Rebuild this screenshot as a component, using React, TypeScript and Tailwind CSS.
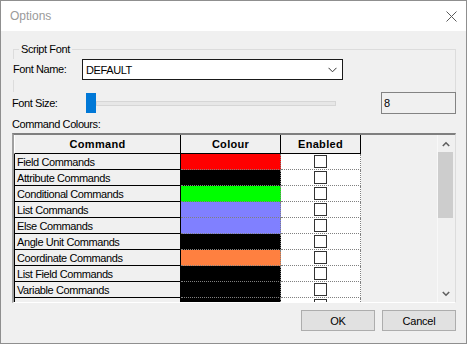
import React from "react";

const rows: { name: string; color: string }[] = [
  { name: "Field Commands", color: "#ff0000" },
  { name: "Attribute Commands", color: "#000000" },
  { name: "Conditional Commands", color: "#00ff00" },
  { name: "List Commands", color: "#8080ff" },
  { name: "Else Commands", color: "#8080ff" },
  { name: "Angle Unit Commands", color: "#000000" },
  { name: "Coordinate Commands", color: "#ff8040" },
  { name: "List Field Commands", color: "#000000" },
  { name: "Variable Commands", color: "#000000" },
  { name: "While Commands", color: "#000000" },
];

export default function App() {
  return (
    <div
      className="w-[467px] h-[344px] border border-[#8f8f8f] bg-[#f0f0f0] flex flex-col overflow-hidden text-[11px] text-black tracking-[-0.4px]"
      style={{ fontFamily: '"Liberation Sans", Arial, sans-serif' }}
    >
      {/* Title bar */}
      <div className="h-[30px] bg-white flex items-center justify-between pl-[9px] pr-[9px] shrink-0">
        <span className="text-[12px] text-[#9a9a9a] tracking-normal leading-[16px]">Options</span>
        <svg width="11" height="11" viewBox="0 0 11 11" className="mt-[1px]">
          <path d="M0.5 0.5 L10.5 10.5 M10.5 0.5 L0.5 10.5" stroke="#5a5a5a" strokeWidth="1" fill="none" />
        </svg>
      </div>

      {/* Body */}
      <div className="flex flex-col">
        <fieldset className="mt-[10px] ml-[12px] w-[443px] border border-b-0 border-[#dcdcdc] pb-[12px]">
          <legend className="ml-[5px] px-[2px] leading-[16px]">Script Font</legend>
          <div className="mt-[2px] flex items-center h-[21px]">
            <span className="-ml-px w-[69px] bg-[#f0f0f0] leading-[21px] h-[21px]">Font Name:</span>
            <div className="w-[261px] h-[21px] border border-[#1a1a1a] bg-white flex items-center justify-between pl-[3px] pr-[5px]">
              <span className="leading-[14px]">DEFAULT</span>
              <svg width="9" height="6" viewBox="0 0 9 6">
                <path d="M0.5 0.8 L4.5 4.8 L8.5 0.8" stroke="#333" strokeWidth="1" fill="none" />
              </svg>
            </div>
          </div>
        </fieldset>

        {/* Font size row */}
        <div className="ml-[11px] w-[444px] h-[22px] flex items-center">
          <span className="w-[74px] leading-[14px] bg-[#f0f0f0]">Font Size:</span>
          <div className="w-[10px] h-[20px] bg-[#0078d7] mb-[1px]" />
          <div className="w-[240px] h-[5px] border border-[#d6d6d6] bg-[#e7e7e7]" />
          <div className="ml-auto w-[75px] h-[22px] border border-[#838383] bg-[#f0f0f0] pl-[2px] pt-[3px] leading-[14px]">
            8
          </div>
        </div>

        <div className="ml-[11px] mt-[3px] leading-[14px]">Command Colours:</div>

        {/* Grid */}
        <div className="ml-[11px] mt-[2px] w-[444px] h-[170px] border-t-2 border-l-2 border-t-[#7f7f7f] border-l-[#a0a0a0] border-r border-b border-r-[#dcdcdc] border-b-[#ffffff] flex overflow-hidden">
          <div className="flex-1 overflow-hidden">
            {/* header */}
            <div className="flex h-[19px]">
              <div className="w-[167px] h-[19px] border-l border-l-white border-r border-b border-black bg-[#f0f0f0] flex items-center justify-center font-bold tracking-[0.3px] text-[11px]">
                Command
              </div>
              <div className="w-[100px] h-[19px] border-r border-b border-black bg-[#f0f0f0] flex items-center justify-center font-bold tracking-[0.3px] text-[11px]">
                Colour
              </div>
              <div className="w-[80px] h-[19px] border-r border-b border-black bg-[#f0f0f0] flex items-center justify-center font-bold tracking-[0.3px] text-[11px]">
                Enabled
              </div>
            </div>
            {rows.map((r) => (
              <div key={r.name} className="flex h-[16px]">
                <div className="w-[167px] h-[16px] border-l border-r border-b border-black bg-[#f0f0f0] pl-[2px] flex items-center leading-[14px] whitespace-nowrap">
                  {r.name}
                </div>
                <div
                  className="w-[100px] h-[16px] border-r border-b border-dotted border-[#808080]"
                  style={{ backgroundColor: r.color }}
                />
                <div className="w-[80px] h-[16px] border-r border-b border-dotted border-[#808080] bg-white flex items-center justify-center">
                  <div className="w-[13px] h-[13px] border border-[#333333] bg-white" />
                </div>
              </div>
            ))}
          </div>
          {/* scrollbar */}
          <div className="w-[18px] h-full border-l border-l-[#f8f8f8] bg-[#f0f0f0] flex flex-col">
            <div className="h-[17px] w-[15px] flex items-center justify-center">
              <svg width="8" height="6" viewBox="0 0 8 6">
                <path d="M0.8 5 L4 1.8 L7.2 5" stroke="#606060" strokeWidth="1.6" fill="none" />
              </svg>
            </div>
            <div className="w-[15px] h-[66px] bg-[#cdcdcd]" />
            <div className="flex-1" />
            <div className="h-[17px] w-[15px] flex items-center justify-center">
              <svg width="8" height="6" viewBox="0 0 8 6">
                <path d="M0.8 1 L4 4.2 L7.2 1" stroke="#606060" strokeWidth="1.6" fill="none" />
              </svg>
            </div>
          </div>
        </div>

        {/* Buttons */}
        <div className="mt-[7px] mr-[10px] flex justify-end gap-[7px]">
          <button className="w-[74px] h-[21px] border border-[#adadad] bg-[#e1e1e1] flex items-center justify-center leading-[14px] tracking-[-0.2px]">
            OK
          </button>
          <button className="w-[74px] h-[21px] border border-[#adadad] bg-[#e1e1e1] flex items-center justify-center leading-[14px] tracking-[-0.2px]">
            Cancel
          </button>
        </div>
      </div>
    </div>
  );
}
